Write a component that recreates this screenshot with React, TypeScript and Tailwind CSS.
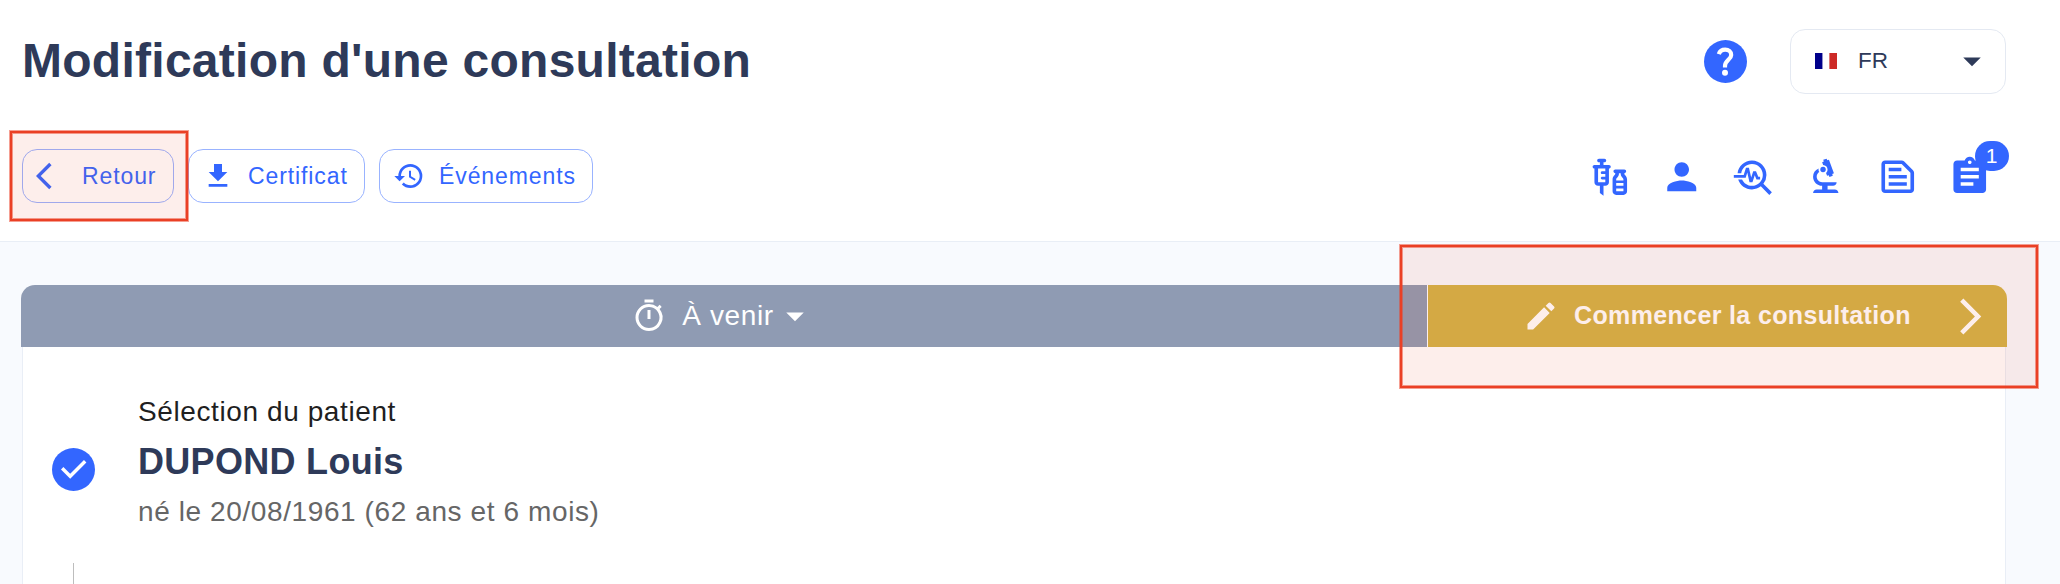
import type { ReactNode } from "react";
import {
  MdArrowBackIos,
  MdArrowDropDown,
  MdArrowForwardIos,
  MdAssignment,
  MdBiotech,
  MdCreate,
  MdFileDownload,
  MdHistory,
  MdOutlineTextSnippet,
  MdOutlineTimer,
  MdOutlineVaccines,
  MdPerson,
  MdTroubleshoot,
} from "react-icons/md";

interface ActionButtonProps {
  icon: ReactNode;
  label: string;
  className: string;
}

const ActionButton = ({ icon, label, className }: ActionButtonProps) => (
  <button
    className={`flex h-[54px] items-center gap-[14px] rounded-[15px] border border-[#99b3ff] pl-[13px] text-[23px] tracking-[0.9px] whitespace-nowrap text-[#3366ff] ${className}`}
  >
    {icon}
    <span>{label}</span>
  </button>
);

const HelpIcon = () => (
  <svg width="43" height="43" viewBox="0 0 43 43" fill="none">
    <circle cx="21.5" cy="21.5" r="21.5" fill="#3366ff" />
    <path
      d="M14.8 14.2c.9-2.8 3.3-4.5 6.4-4.5 3.5 0 6 2.2 6 5.2 0 4.6-6.2 5.4-6.2 11.1v1.6"
      stroke="#fff"
      strokeWidth="4.2"
    />
    <circle cx="21" cy="32.7" r="3" fill="#fff" />
  </svg>
);

const CheckIcon = () => (
  <svg width="43" height="43" viewBox="0 0 43 43" fill="none" className="shrink-0">
    <circle cx="21.5" cy="21.5" r="21.5" fill="#3366ff" />
    <path d="m10.2 20.3 8 8 15-15" stroke="#fff" strokeWidth="3.4" />
  </svg>
);

const FrenchFlag = () => (
  <svg width="22" height="16" viewBox="0 0 22 16">
    <rect width="22" height="16" fill="#f4f4f6" />
    <rect x="8" width="6" height="16" fill="#fff" />
    <rect width="7.4" height="16" fill="#00008b" />
    <rect x="14.4" width="7.6" height="16" fill="#cd2a27" />
  </svg>
);

const Header = () => (
  <header className="h-[242px] border-b border-[#e9eef6] bg-white">
    <div className="flex h-[122px] items-center justify-between pr-[54px] pl-[22px]">
      <h1 className="pb-px text-[48px] leading-[56px] font-bold tracking-[0.27px]">Modification d'une consultation</h1>
      <div className="flex items-center gap-[43px]">
        <HelpIcon />
        <div className="flex h-[65px] w-[216px] items-center rounded-[15px] border border-[#e4e9f2] pr-3 pl-6">
          <FrenchFlag />
          <span className="ml-[21px] flex-1 text-[22.5px]">FR</span>
          <MdArrowDropDown className="size-[42px]" />
        </div>
      </div>
    </div>

    <div className="flex h-[108px] items-center justify-between pr-[69px] pl-[22px]">
      <div className="flex">
        <ActionButton icon={<MdArrowBackIos className="size-8" />} label="Retour" className="w-[152px]" />
        <ActionButton icon={<MdFileDownload className="size-8" />} label="Certificat" className="ml-[14px] w-[177px]" />
        <ActionButton icon={<MdHistory className="size-8" />} label="Événements" className="ml-[14px] w-[214px]" />
      </div>
      <div className="flex gap-[28.3px] pt-px text-[43.5px] text-[#3366ff]">
        <MdOutlineVaccines />
        <MdPerson />
        <MdTroubleshoot />
        <MdBiotech />
        <MdOutlineTextSnippet />
        <div className="relative">
          <MdAssignment />
          <span className="absolute -top-[14px] left-[27px] flex h-[30px] w-[34px] items-center justify-center rounded-full bg-[#3366ff] text-[21px] text-white">
            1
          </span>
        </div>
      </div>
    </div>
  </header>
);

const StatusBar = () => (
  <div className="flex h-[62px] gap-px overflow-hidden rounded-t-[14px] bg-white text-white">
    <div className="flex w-[1406px] items-center justify-center bg-[#8f9bb3] pr-px">
      <MdOutlineTimer className="size-9" />
      <span className="ml-[15px] text-[28px] tracking-[0.6px]">À venir</span>
      <MdArrowDropDown className="size-[42px]" />
    </div>
    <div className="flex flex-1 items-center bg-[#d2b448] pl-[95px]">
      <MdCreate className="size-9" />
      <span className="ml-[15px] flex-1 text-[25px] font-bold tracking-[0.36px]">Commencer la consultation</span>
      <MdArrowForwardIos className="mr-[15px] size-[43px]" />
    </div>
  </div>
);

const PatientStep = () => (
  <div className="mx-px flex h-[237px] border-x border-[#e9eef6] bg-white pl-[29px]">
    <div className="flex w-[43px] flex-col items-center pt-[101px]">
      <CheckIcon />
      <div className="mt-[72px] w-px flex-1 bg-[#bdbdbd]" />
    </div>
    <div className="pt-[40px] pl-[43px] whitespace-nowrap">
      <p className="text-[28px] leading-[50px] tracking-[0.6px] text-[#1f1f1f]">Sélection du patient</p>
      <p className="text-[36px] leading-[50px] font-bold tracking-[0.3px]">DUPOND Louis</p>
      <p className="text-[28px] leading-[50px] tracking-[0.6px] text-[#666]">né le 20/08/1961 (62 ans et 6 mois)</p>
    </div>
  </div>
);

interface HighlightProps {
  className: string;
}

const Highlight = ({ className }: HighlightProps) => (
  <div
    className={`pointer-events-none absolute border-2 border-[#ea4025] bg-[#eb4025]/9 bg-clip-padding shadow-[0_0_0_1px_rgba(235,64,37,0.5),inset_0_0_0_1px_rgba(235,64,37,0.5)] ${className}`}
  />
);

const App = () => (
  <div className="relative h-[584px] w-[2060px] overflow-hidden bg-[#f8fafe] font-['Liberation_Sans',Arial,sans-serif] text-[#2e3a59]">
    <Header />
    <main className="pt-[43px] pr-[53px] pl-[21px]">
      <StatusBar />
      <PatientStep />
    </main>
    <Highlight className="top-[131px] left-[10px] h-[90px] w-[178px]" />
    <Highlight className="top-[245px] left-[1400px] h-[143px] w-[638px]" />
  </div>
);

export default App;
